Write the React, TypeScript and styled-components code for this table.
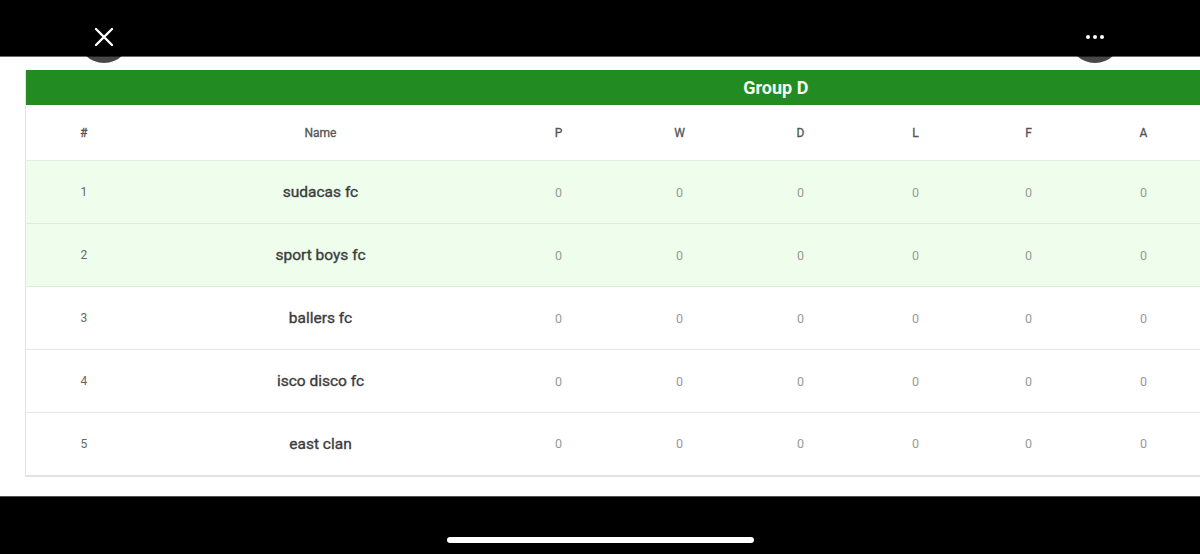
import React from 'react';
import styled, { createGlobalStyle } from 'styled-components';

const GlobalStyle = createGlobalStyle`
 html, body {
  margin: 0;
  padding: 0;
  background: #000;
  font-family: Roboto, 'Liberation Sans', Arial, sans-serif;
 }
`;

const Screen = styled.div`
 position: relative;
 width: 1200px;
 height: 554px;
 display: flex;
 flex-direction: column;
 overflow: hidden;
 background: #fff;
`;

const TopBar = styled.div`
 height: 57px;
 flex: none;
 background: #000;
 border-bottom: 1px solid #6a6a6a;
 box-sizing: border-box;
`;

const RoundButton = styled.div<{ $left: number }>`
 position: absolute;
 top: 11px;
 left: ${p => p.$left - 26}px;
 width: 52px;
 height: 52px;
 border-radius: 50%;
 background: rgba(0, 0, 0, 0.72);
 display: flex;
 align-items: center;
 justify-content: center;
 z-index: 2;
`;

const Dots = styled.div`
 display: flex;
 gap: 3px;
 span {
  width: 4px;
  height: 4px;
  border-radius: 50%;
  background: #fff;
 }
`;

const Content = styled.div`
 flex: 1;
 padding: 13px 0 0 25px;
 overflow: hidden;
 background: #fff;
`;

const Table = styled.table`
 width: 1500px;
 table-layout: fixed;
 border-collapse: collapse;
 border-left: 1px solid #e4e4e4;
 border-bottom: 2px solid #e2e2e2;
`;

const GroupHead = styled.th`
 height: 35px;
 padding: 0;
 background: #228b22;
 color: #f4fbf2;
 font-size: 18px;
 font-weight: 700;
 text-align: center;
`;

const HeadCell = styled.th`
 height: 55px;
 padding: 0;
 font-size: 12px;
 font-weight: 400;
 -webkit-text-stroke: 0.3px #555;
 color: #555;
 text-align: center;
 border-bottom: 1px solid #e6ede6;
`;

const Row = styled.tr<{ $qualified: boolean }>`
 height: 63px;
 background: ${p => (p.$qualified ? '#eefdec' : '#ffffff')};
 border-bottom: 1px solid ${p => (p.$qualified ? '#dfe9de' : '#e6e6e6')};
`;

const PosCell = styled.td`
 padding: 0;
 text-align: center;
 font-size: 12px;
 color: #666;
`;

const NameCell = styled.td`
 padding: 0;
 text-align: center;
 font-size: 15.5px;
 font-weight: 400;
 -webkit-text-stroke: 0.35px #3c3c3c;
 color: #3c3c3c;
`;

const StatCell = styled.td`
 padding: 0;
 text-align: center;
 font-size: 12.5px;
 color: #999;
`;

const BottomBar = styled.div`
 height: 58px;
 flex: none;
 background: #000;
 border-top: 1px solid #555;
 box-sizing: border-box;
 display: flex;
 justify-content: center;
 padding-top: 40px;
`;

const HomeIndicator = styled.div`
 width: 307px;
 height: 6px;
 border-radius: 3px;
 background: #fff;
`;

// the last column is the part of the table that runs past the screen edge
const columns = [116, 358, 118, 124, 118, 112, 114, 116, 324];
const statLabels = ['P', 'W', 'D', 'L', 'F', 'A'];

const teams = ['sudacas fc', 'sport boys fc', 'ballers fc', 'isco disco fc', 'east clan'];

const App: React.FC = () => (
 <Screen>
  <GlobalStyle />
  <TopBar />
  <RoundButton $left={104}>
   <svg width="20" height="20" viewBox="0 0 20 20">
    <path d="M2 2 L18 18 M18 2 L2 18" stroke="#fff" strokeWidth="2.4" strokeLinecap="round" />
   </svg>
  </RoundButton>
  <RoundButton $left={1095}>
   <Dots>
    <span />
    <span />
    <span />
   </Dots>
  </RoundButton>
  <Content>
   <Table>
    <colgroup>
     {columns.map((w, i) => (
      <col key={i} style={{ width: w }} />
     ))}
    </colgroup>
    <thead>
     <tr>
      <GroupHead colSpan={columns.length}>Group D</GroupHead>
     </tr>
     <tr>
      <HeadCell>#</HeadCell>
      <HeadCell>Name</HeadCell>
      {statLabels.map(l => (
       <HeadCell key={l}>{l}</HeadCell>
      ))}
      <HeadCell />
     </tr>
    </thead>
    <tbody>
     {teams.map((team, i) => (
      <Row key={team} $qualified={i < 2}>
       <PosCell>{i + 1}</PosCell>
       <NameCell>{team}</NameCell>
       {statLabels.map(l => (
        <StatCell key={l}>0</StatCell>
       ))}
       <StatCell />
      </Row>
     ))}
    </tbody>
   </Table>
  </Content>
  <BottomBar>
   <HomeIndicator />
  </BottomBar>
 </Screen>
);

export default App;
